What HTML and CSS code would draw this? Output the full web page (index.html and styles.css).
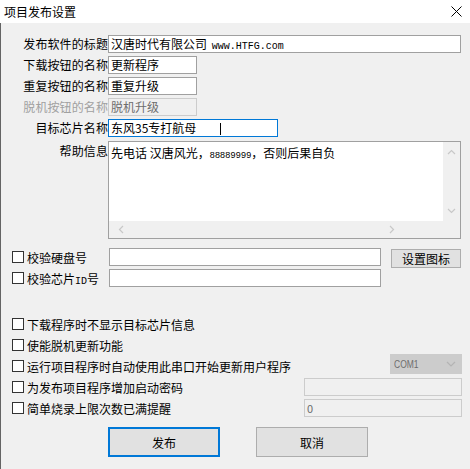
FILE: index.html
```html
<!DOCTYPE html>
<html lang="zh-CN">
  <head>
    <meta charset="UTF-8" />
    <title>项目发布设置</title>
    <link rel="stylesheet" href="styles.css">
  </head>
  <body>
    <div class="dialog">
      <div class="titlebar">
        <span class="title">项目发布设置</span>
        <svg class="close" width="11" height="11" viewBox="0 0 11 11">
          <path d="M0.5 0.5 L10.5 10.5 M10.5 0.5 L0.5 10.5" stroke="#000" stroke-width="1" fill="none" />
        </svg>
      </div>

      <div class="client">
        <!-- 名称设置 -->
        <div class="fields">
          <label class="lbl">发布软件的标题</label>
          <div class="field w-full">汉唐时代有限公司 <span class="mono">www.HTFG.com</span></div>

          <label class="lbl">下载按钮的名称</label>
          <div class="field w-short">更新程序</div>

          <label class="lbl">重复按钮的名称</label>
          <div class="field w-short">重复升级</div>

          <label class="lbl disabled">脱机按钮的名称</label>
          <div class="field w-short field-disabled">脱机升级</div>

          <label class="lbl">目标芯片名称</label>
          <div class="field w-mid field-focus">东风35专打航母<span class="caret"></span></div>

          <label class="lbl lbl-top">帮助信息</label>
          <div class="memo">
            <div class="memo-text">先电话 汉唐风光，<span class="small-digits">88889999</span>，否则后果自负</div>
            <div class="vscroll">
              <svg width="9" height="6" viewBox="0 0 9 6"><path d="M1 5 L4.5 1.5 L8 5" stroke="#c8c8c8" fill="none" stroke-width="1.2"/></svg>
              <svg width="9" height="6" viewBox="0 0 9 6"><path d="M1 1 L4.5 4.5 L8 1" stroke="#c8c8c8" fill="none" stroke-width="1.2"/></svg>
            </div>
            <div class="hscroll">
              <svg width="6" height="9" viewBox="0 0 6 9"><path d="M5 1 L1.5 4.5 L5 8" stroke="#c8c8c8" fill="none" stroke-width="1.2"/></svg>
              <svg width="6" height="9" viewBox="0 0 6 9"><path d="M1 1 L4.5 4.5 L1 8" stroke="#c8c8c8" fill="none" stroke-width="1.2"/></svg>
            </div>
            <div class="corner"></div>
          </div>
        </div>

        <!-- 校验 -->
        <div class="checks">
          <label class="check"><span class="box"></span><span>校验硬盘号</span></label>
          <div class="field w-check"></div>
          <button class="btn btn-small">设置图标</button>

          <label class="check"><span class="box"></span><span>校验芯片<span class="id">ID</span>号</span></label>
          <div class="field w-check"></div>
          <span></span>
        </div>

        <!-- 选项 -->
        <div class="options">
          <div class="opt">
            <label class="check"><span class="box"></span><span>下载程序时不显示目标芯片信息</span></label>
          </div>
          <div class="opt">
            <label class="check"><span class="box"></span><span>使能脱机更新功能</span></label>
          </div>
          <div class="opt">
            <label class="check"><span class="box"></span><span>运行项目程序时自动使用此串口开始更新用户程序</span></label>
            <div class="combo">
              <span class="combo-text">COM1</span>
              <svg width="10" height="6" viewBox="0 0 10 6"><path d="M1 1 L5 5 L9 1" stroke="#b4b4b4" fill="none" stroke-width="1.2"/></svg>
            </div>
          </div>
          <div class="opt">
            <label class="check"><span class="box"></span><span>为发布项目程序增加启动密码</span></label>
            <div class="field w-opt field-off"></div>
          </div>
          <div class="opt">
            <label class="check"><span class="box"></span><span>简单烧录上限次数已满提醒</span></label>
            <div class="field w-opt field-off">0</div>
          </div>
        </div>

        <div class="actions">
          <button class="btn btn-big btn-default">发布</button>
          <button class="btn btn-big">取消</button>
        </div>
      </div>
    </div>
  </body>
</html>
```

FILE: styles.css
```css
* {
  box-sizing: border-box;
  margin: 0;
  padding: 0;
}

html,
body {
  width: 470px;
  height: 469px;
  overflow: hidden;
  background: #f0f0f0;
  font-family: "Noto Sans CJK SC", "Microsoft YaHei", sans-serif;
  font-size: 12px;
  color: #000;
}

.dialog {
  display: flex;
  flex-direction: column;
  height: 469px;
}

/* Title bar */
.titlebar {
  height: 23px;
  background: #fff;
  display: flex;
  align-items: center;
  justify-content: space-between;
  padding: 0 8px 0 4px;
  font-size: 12px;
}

.close {
  margin-top: -1px;
}

.client {
  flex: 1;
  border-left: 1px solid #646464;
  padding: 12px 8px 0 0;
}

/* Top fields */
.fields {
  display: grid;
  grid-template-columns: 107px 1fr;
  grid-template-rows: repeat(5, 18px) 99px;
  row-gap: 3px;
}

.lbl {
  text-align: right;
  line-height: 18px;
  white-space: nowrap;
  letter-spacing: 0.1px;
}

.lbl-top {
  line-height: 16px;
  padding-top: 3px;
}

.disabled {
  color: #a0a0a0;
}

.field {
  height: 18px;
  background: #fff;
  border: 1px solid #a0a0a0;
  line-height: 16px;
  padding-left: 2px;
  white-space: nowrap;
  overflow: hidden;
}

.w-full {
  width: 353px;
}

.w-short {
  width: 89px;
}

.w-mid {
  width: 170px;
}

.field-disabled {
  background: #f0f0f0;
  border-color: #cccccc;
  color: #6d6d6d;
}

.field-focus {
  border-color: #0078d7;
}

.caret {
  display: inline-block;
  width: 1px;
  height: 12px;
  background: #000;
  margin-left: 24px;
  vertical-align: -2px;
}

.mono {
  font-family: "Liberation Mono", monospace;
  font-size: 10px;
  margin-left: 2px;
}

/* Help memo */
.memo {
  height: 98px;
  width: 353px;
  margin-top: 1px;
  border: 1px solid #a0a0a0;
  background: #fff;
  display: grid;
  grid-template-columns: 1fr 17px;
  grid-template-rows: 1fr 17px;
}

.memo-text {
  padding: 3px 0 0 2px;
  line-height: 16px;
}

.small-digits {
  font-family: "Liberation Sans", sans-serif;
  font-size: 9px;
  letter-spacing: 0.2px;
}

.vscroll {
  background: #f0f0f0;
  display: flex;
  flex-direction: column;
  justify-content: space-between;
  align-items: center;
  padding: 7px 0 7px;
}

.hscroll {
  background: #f0f0f0;
  display: flex;
  justify-content: space-between;
  align-items: center;
  padding: 0 48px 0 9px;
}

.corner {
  background: #f0f0f0;
}

/* Check rows */
.checks {
  display: grid;
  grid-template-columns: 108px 282px 70px;
  grid-auto-rows: 18px;
  row-gap: 3px;
  margin-top: 9px;
}

.check {
  display: flex;
  align-items: center;
  gap: 3px;
  padding-left: 11px;
  white-space: nowrap;
}

.box {
  width: 12px;
  height: 12px;
  border: 1px solid #333;
  background: #fff;
  flex: none;
}

.id {
  font-family: "Liberation Mono", monospace;
  font-size: 10px;
}

.w-check {
  width: 272px;
}

.btn {
  font-family: inherit;
  font-size: 12px;
  color: #000;
  background: #e1e1e1;
  border: 1px solid #adadad;
}

.btn-small {
  width: 70px;
  height: 19px;
  margin-top: 1px;
  line-height: 16px;
}

/* Options */
.options {
  display: flex;
  flex-direction: column;
  gap: 1px;
  margin-top: 27px;
}

.opt {
  height: 20px;
  display: flex;
  align-items: center;
  justify-content: space-between;
}

.combo {
  width: 72px;
  height: 20px;
  margin-top: -4px;
  background: #cccccc;
  display: flex;
  align-items: center;
  justify-content: space-between;
  padding: 0 6px 0 4px;
}

.combo-text {
  font-family: "Liberation Sans Narrow", "Liberation Sans", sans-serif;
  font-size: 10px;
  color: #6d6d6d;
  transform: scaleX(0.85);
  transform-origin: left center;
}

.w-opt {
  width: 158px;
}

.field-off {
  background: #f0f0f0;
  border-color: #cccccc;
  color: #6d6d6d;
  font-size: 11px;
}

/* Buttons */
.actions {
  display: flex;
  gap: 36px;
  padding-left: 107px;
  margin-top: 9px;
}

.btn-big {
  width: 112px;
  height: 30px;
}

.btn-default {
  border: 2px solid #0078d7;
}
```
